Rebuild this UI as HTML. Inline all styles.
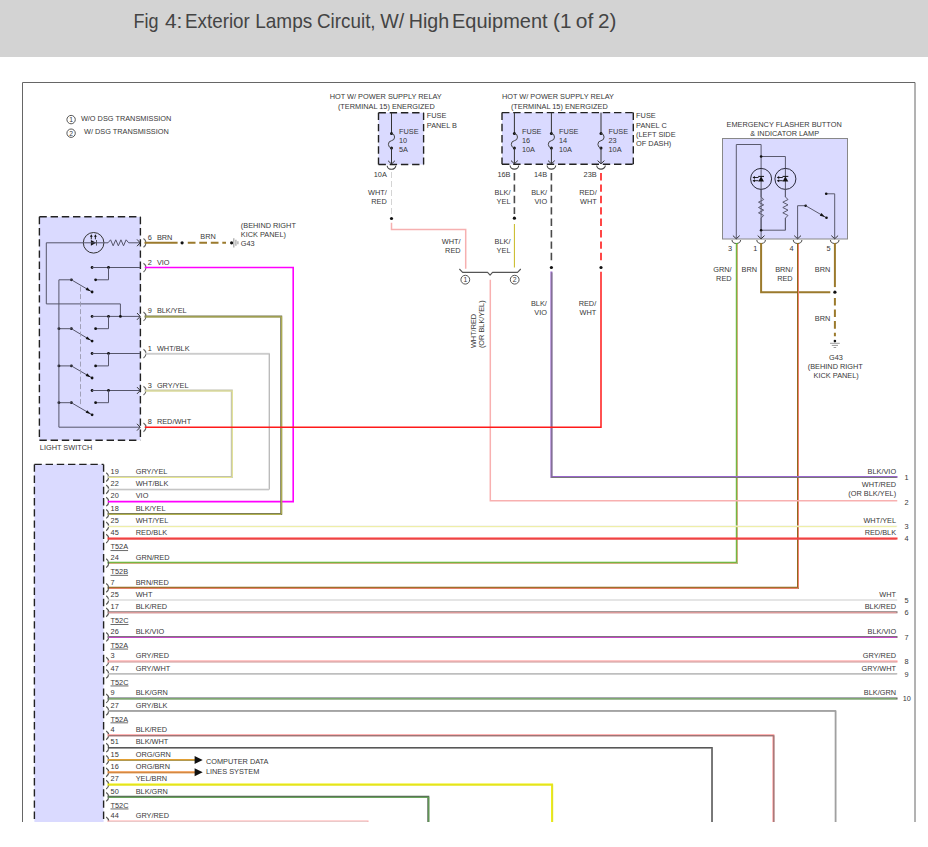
<!DOCTYPE html><html><head><meta charset="utf-8"><style>html,body{margin:0;padding:0;background:#fff;overflow:hidden}svg{display:block}</style></head><body><svg width="928" height="847" viewBox="0 0 928 847" font-family="Liberation Sans, sans-serif">
<rect x="0" y="0" width="928" height="847" fill="#fff"/>
<rect x="0" y="0" width="928" height="57" fill="#d3d3d3"/>
<text x="133.60" y="28.1" font-size="20.2" fill="#444" textLength="25.00" lengthAdjust="spacingAndGlyphs">Fig</text>
<text x="165.00" y="28.1" font-size="20.2" fill="#444" textLength="17.40" lengthAdjust="spacingAndGlyphs">4:</text>
<text x="185.00" y="28.1" font-size="20.2" fill="#444" textLength="64.80" lengthAdjust="spacingAndGlyphs">Exterior</text>
<text x="255.20" y="28.1" font-size="20.2" fill="#444" textLength="57.00" lengthAdjust="spacingAndGlyphs">Lamps</text>
<text x="317.00" y="28.1" font-size="20.2" fill="#444" textLength="58.60" lengthAdjust="spacingAndGlyphs">Circuit,</text>
<text x="380.20" y="28.1" font-size="20.2" fill="#444" textLength="24.00" lengthAdjust="spacingAndGlyphs">W/</text>
<text x="408.80" y="28.1" font-size="20.2" fill="#444" textLength="40.40" lengthAdjust="spacingAndGlyphs">High</text>
<text x="452.00" y="28.1" font-size="20.2" fill="#444" textLength="95.60" lengthAdjust="spacingAndGlyphs">Equipment</text>
<text x="553.00" y="28.1" font-size="20.2" fill="#444" textLength="18.40" lengthAdjust="spacingAndGlyphs">(1</text>
<text x="575.80" y="28.1" font-size="20.2" fill="#444" textLength="17.50" lengthAdjust="spacingAndGlyphs">of</text>
<text x="598.00" y="28.1" font-size="20.2" fill="#444" textLength="18.40" lengthAdjust="spacingAndGlyphs">2)</text>
<path d="M22.5,822 L22.5,82.5 L915,82.5 L915,822" stroke="#666" stroke-width="1" fill="none"/>
<circle cx="71.1" cy="119.6" r="4.2" fill="none" stroke="#444" stroke-width="0.9"/>
<text x="71.1" y="122.0" text-anchor="middle" font-size="6.8" fill="#383838">1</text>
<circle cx="71.1" cy="133.2" r="4.2" fill="none" stroke="#444" stroke-width="0.9"/>
<text x="71.1" y="135.6" text-anchor="middle" font-size="6.8" fill="#383838">2</text>
<text x="80.9" y="120.8" font-size="7.35" fill="#383838">W/O DSG TRANSMISSION</text>
<text x="84" y="134" font-size="7.35" fill="#383838">W/ DSG TRANSMISSION</text>
<text x="329.7" y="99" font-size="7.35" fill="#383838">HOT W/ POWER SUPPLY RELAY</text>
<text x="337.9" y="108.8" font-size="7.35" fill="#383838">(TERMINAL 15) ENERGIZED</text>
<rect x="378.5" y="112.7" width="45.10000000000002" height="51.8" fill="#dadaff"/>
<path d="M378.5,112.7 L423.6,112.7 M378.5,112.7 L378.5,164.5 M423.6,112.7 L423.6,164.5 M378.5,164.5 L423.6,164.5" stroke="#222" stroke-width="1.4" stroke-dasharray="7.4,3.8" fill="none"/>
<text x="426.8" y="117.7" font-size="7.35" fill="#383838">FUSE</text>
<text x="426.8" y="127.9" font-size="7.35" fill="#383838">PANEL B</text>
<line x1="391.5" y1="112.7" x2="391.5" y2="133.3" stroke="#333" stroke-width="1"/>
<circle cx="391.5" cy="133.4" r="1.5" fill="#111"/>
<circle cx="391.5" cy="148" r="1.5" fill="#111"/>
<path d="M391.5,133.4 A3.7,3.7 0 0 1 391.5,140.7 A3.7,3.7 0 0 0 391.5,148" stroke="#444" stroke-width="1" fill="none"/>
<line x1="391.5" y1="147.9" x2="391.5" y2="164.0" stroke="#333" stroke-width="1"/>
<path d="M388.1,160.8 L391.5,164.0 L394.9,160.8" stroke="#333" stroke-width="1" fill="none"/>
<path d="M387.2,165.7 A4.3,3.6 0 0 0 395.8,165.7" stroke="#444" stroke-width="1.1" fill="none"/>
<text x="399.0" y="133.8" font-size="7.35" fill="#383838">FUSE</text>
<text x="399.0" y="143" font-size="7.35" fill="#383838">10</text>
<text x="399.0" y="151.8" font-size="7.35" fill="#383838">5A</text>
<text x="386.8" y="177" text-anchor="end" font-size="7.35" fill="#383838">10A</text>
<text x="386.8" y="194.7" text-anchor="end" font-size="7.35" fill="#383838">WHT/</text>
<text x="386.8" y="203.8" text-anchor="end" font-size="7.35" fill="#383838">RED</text>
<line x1="391.5" y1="172" x2="391.5" y2="214.5" stroke="#d4d4d4" stroke-width="1" stroke-dasharray="6,3"/>
<circle cx="391.5" cy="218.5" r="1.6" fill="#111"/>
<path d="M391.5,223.5 L391.5,229.6 L465.7,229.6 L465.7,268" stroke="#f6b0b0" stroke-width="1.5" fill="none" stroke-linejoin="miter" stroke-linecap="square"/>
<text x="501.9" y="99" font-size="7.35" fill="#383838">HOT W/ POWER SUPPLY RELAY</text>
<text x="510.9" y="108.7" font-size="7.35" fill="#383838">(TERMINAL 15) ENERGIZED</text>
<rect x="502" y="112.6" width="131.29999999999995" height="51.70000000000002" fill="#dadaff"/>
<path d="M502,112.6 L633.3,112.6 M502,112.6 L502,164.3 M633.3,112.6 L633.3,164.3 M502,164.3 L633.3,164.3" stroke="#222" stroke-width="1.4" stroke-dasharray="7.4,3.8" fill="none"/>
<text x="636.1" y="117.8" font-size="7.35" fill="#383838">FUSE</text>
<text x="636.1" y="128.3" font-size="7.35" fill="#383838">PANEL C</text>
<text x="636.1" y="136.8" font-size="7.35" fill="#383838">(LEFT SIDE</text>
<text x="636.1" y="146" font-size="7.35" fill="#383838">OF DASH)</text>
<line x1="514.4" y1="112.6" x2="514.4" y2="133.3" stroke="#333" stroke-width="1"/>
<circle cx="514.4" cy="133.4" r="1.5" fill="#111"/>
<circle cx="514.4" cy="148" r="1.5" fill="#111"/>
<path d="M514.4,133.4 A3.7,3.7 0 0 1 514.4,140.7 A3.7,3.7 0 0 0 514.4,148" stroke="#444" stroke-width="1" fill="none"/>
<line x1="514.4" y1="147.9" x2="514.4" y2="163.8" stroke="#333" stroke-width="1"/>
<path d="M511.0,160.60000000000002 L514.4,163.8 L517.8,160.60000000000002" stroke="#333" stroke-width="1" fill="none"/>
<path d="M510.09999999999997,165.5 A4.3,3.6 0 0 0 518.6999999999999,165.5" stroke="#444" stroke-width="1.1" fill="none"/>
<text x="521.9" y="133.8" font-size="7.35" fill="#383838">FUSE</text>
<text x="521.9" y="143" font-size="7.35" fill="#383838">16</text>
<text x="521.9" y="151.8" font-size="7.35" fill="#383838">10A</text>
<line x1="551.4" y1="112.6" x2="551.4" y2="133.3" stroke="#333" stroke-width="1"/>
<circle cx="551.4" cy="133.4" r="1.5" fill="#111"/>
<circle cx="551.4" cy="148" r="1.5" fill="#111"/>
<path d="M551.4,133.4 A3.7,3.7 0 0 1 551.4,140.7 A3.7,3.7 0 0 0 551.4,148" stroke="#444" stroke-width="1" fill="none"/>
<line x1="551.4" y1="147.9" x2="551.4" y2="163.8" stroke="#333" stroke-width="1"/>
<path d="M548.0,160.60000000000002 L551.4,163.8 L554.8,160.60000000000002" stroke="#333" stroke-width="1" fill="none"/>
<path d="M547.1,165.5 A4.3,3.6 0 0 0 555.6999999999999,165.5" stroke="#444" stroke-width="1.1" fill="none"/>
<text x="558.9" y="133.8" font-size="7.35" fill="#383838">FUSE</text>
<text x="558.9" y="143" font-size="7.35" fill="#383838">14</text>
<text x="558.9" y="151.8" font-size="7.35" fill="#383838">10A</text>
<line x1="601" y1="112.6" x2="601" y2="133.3" stroke="#333" stroke-width="1"/>
<circle cx="601" cy="133.4" r="1.5" fill="#111"/>
<circle cx="601" cy="148" r="1.5" fill="#111"/>
<path d="M601,133.4 A3.7,3.7 0 0 1 601,140.7 A3.7,3.7 0 0 0 601,148" stroke="#444" stroke-width="1" fill="none"/>
<line x1="601" y1="147.9" x2="601" y2="163.8" stroke="#333" stroke-width="1"/>
<path d="M597.6,160.60000000000002 L601,163.8 L604.4,160.60000000000002" stroke="#333" stroke-width="1" fill="none"/>
<path d="M596.7,165.5 A4.3,3.6 0 0 0 605.3,165.5" stroke="#444" stroke-width="1.1" fill="none"/>
<text x="608.5" y="133.8" font-size="7.35" fill="#383838">FUSE</text>
<text x="608.5" y="143" font-size="7.35" fill="#383838">23</text>
<text x="608.5" y="151.8" font-size="7.35" fill="#383838">10A</text>
<text x="510.5" y="176.6" text-anchor="end" font-size="7.35" fill="#383838">16B</text>
<text x="547.1" y="176.6" text-anchor="end" font-size="7.35" fill="#383838">14B</text>
<text x="596.7" y="176.6" text-anchor="end" font-size="7.35" fill="#383838">23B</text>
<text x="510.5" y="194.9" text-anchor="end" font-size="7.35" fill="#383838">BLK/</text>
<text x="510.5" y="204" text-anchor="end" font-size="7.35" fill="#383838">YEL</text>
<text x="547.1" y="194.9" text-anchor="end" font-size="7.35" fill="#383838">BLK/</text>
<text x="547.1" y="204" text-anchor="end" font-size="7.35" fill="#383838">VIO</text>
<text x="596.7" y="194.9" text-anchor="end" font-size="7.35" fill="#383838">RED/</text>
<text x="596.7" y="204" text-anchor="end" font-size="7.35" fill="#383838">WHT</text>
<line x1="514.4" y1="173" x2="514.4" y2="214" stroke="#4a4a4a" stroke-width="1.6" stroke-dasharray="7.4,4"/>
<circle cx="514.4" cy="218.2" r="1.6" fill="#111"/>
<line x1="514.4" y1="224" x2="514.4" y2="267.5" stroke="#c8b820" stroke-width="1"/>
<line x1="551.4" y1="173" x2="551.4" y2="262" stroke="#4a4a4a" stroke-width="1.6" stroke-dasharray="7.4,4"/>
<circle cx="551.4" cy="267.5" r="1.6" fill="#111"/>
<line x1="601" y1="173" x2="601" y2="262" stroke="#ff1a1a" stroke-width="1.6" stroke-dasharray="7.4,4"/>
<circle cx="601" cy="267.5" r="1.6" fill="#111"/>
<path d="M459.4,269 L462.6,272.4 L487.6,272.4 L490.1,275.2 L492.5,272.4 L517.5,272.4 L520.8,269" stroke="#555" stroke-width="1.1" fill="none" stroke-linejoin="round"/>
<circle cx="465.3" cy="279.7" r="4.4" fill="none" stroke="#444" stroke-width="0.9"/>
<text x="465.3" y="282.09999999999997" text-anchor="middle" font-size="6.8" fill="#383838">1</text>
<circle cx="514.7" cy="279.7" r="4.4" fill="none" stroke="#444" stroke-width="0.9"/>
<text x="514.7" y="282.09999999999997" text-anchor="middle" font-size="6.8" fill="#383838">2</text>
<text x="460.6" y="244.2" text-anchor="end" font-size="7.35" fill="#383838">WHT/</text>
<text x="460.6" y="252.5" text-anchor="end" font-size="7.35" fill="#383838">RED</text>
<text x="510.5" y="244.2" text-anchor="end" font-size="7.35" fill="#383838">BLK/</text>
<text x="510.5" y="252.5" text-anchor="end" font-size="7.35" fill="#383838">YEL</text>
<text transform="translate(475.5,348.1) rotate(-90)" font-size="7.35" fill="#383838">WHT/RED</text>
<text transform="translate(484.4,348.1) rotate(-90)" font-size="7.35" fill="#383838">(OR BLK/YEL)</text>
<text x="546.9" y="306.2" text-anchor="end" font-size="7.35" fill="#383838">BLK/</text>
<text x="546.9" y="314.8" text-anchor="end" font-size="7.35" fill="#383838">VIO</text>
<text x="596.2" y="306.2" text-anchor="end" font-size="7.35" fill="#383838">RED/</text>
<text x="596.2" y="314.8" text-anchor="end" font-size="7.35" fill="#383838">WHT</text>
<text x="784.1" y="127.2" text-anchor="middle" font-size="7.35" fill="#383838">EMERGENCY FLASHER BUTTON</text>
<text x="784.7" y="135.8" text-anchor="middle" font-size="7.35" fill="#383838">&amp; INDICATOR LAMP</text>
<rect x="722.5" y="138.5" width="125" height="100.5" fill="#dadaff" stroke="#888" stroke-width="1"/>
<path d="M736.3,238.5 L736.3,144.5 L761.1,144.5 L761.1,238.5" stroke="#5a5a6e" stroke-width="1" fill="none"/>
<path d="M761.1,156.5 L785.4,156.5 L785.4,196.9" stroke="#5a5a6e" stroke-width="1" fill="none"/>
<circle cx="761.1" cy="156.5" r="1.3" fill="#111"/>
<circle cx="761.1" cy="178.9" r="10.5" fill="none" stroke="#2a2a3a" stroke-width="1"/>
<path d="M758.2,181.4 L764.0,181.4 L761.1,176.6 Z" fill="#111"/>
<line x1="758.2" y1="176.4" x2="764.0" y2="176.4" stroke="#111" stroke-width="1"/>
<line x1="753.6" y1="177.5" x2="758.5" y2="177.5" stroke="#111" stroke-width="0.9"/>
<path d="M752.5,177.5 L754.9,176.0 L754.9,179.0 Z" fill="#111"/>
<line x1="753.6" y1="180.7" x2="758.5" y2="180.7" stroke="#111" stroke-width="0.9"/>
<path d="M752.5,180.7 L754.9,179.2 L754.9,182.2 Z" fill="#111"/>
<path d="M761.1,189.4 L761.1,196.9 L763.7,199.55 L758.5,202.20000000000002 L763.7,204.85 L758.5,207.5 L763.7,210.15 L758.5,212.8 L763.7,215.45000000000002 L761.1,218.1 L761.1,230.2" stroke="#5a5a6e" stroke-width="1" fill="none"/>
<circle cx="785.4" cy="178.9" r="10.5" fill="none" stroke="#2a2a3a" stroke-width="1"/>
<path d="M782.5,181.4 L788.3,181.4 L785.4,176.6 Z" fill="#111"/>
<line x1="782.5" y1="176.4" x2="788.3" y2="176.4" stroke="#111" stroke-width="1"/>
<line x1="777.9" y1="177.5" x2="782.8" y2="177.5" stroke="#111" stroke-width="0.9"/>
<path d="M776.8,177.5 L779.1999999999999,176.0 L779.1999999999999,179.0 Z" fill="#111"/>
<line x1="777.9" y1="180.7" x2="782.8" y2="180.7" stroke="#111" stroke-width="0.9"/>
<path d="M776.8,180.7 L779.1999999999999,179.2 L779.1999999999999,182.2 Z" fill="#111"/>
<path d="M785.4,189.4 L785.4,196.9 L788.0,199.55 L782.8,202.20000000000002 L788.0,204.85 L782.8,207.5 L788.0,210.15 L782.8,212.8 L788.0,215.45000000000002 L785.4,218.1 L785.4,230.2" stroke="#5a5a6e" stroke-width="1" fill="none"/>
<path d="M761.1,230.2 L785.4,230.2 L785.4,218.1" stroke="#5a5a6e" stroke-width="1" fill="none"/>
<circle cx="761.1" cy="230.2" r="1.3" fill="#111"/>
<path d="M797.6,238.5 L797.6,205.7 L805.7,205.7" stroke="#5a5a6e" stroke-width="1" fill="none"/>
<circle cx="805.7" cy="205.7" r="1.3" fill="#111"/>
<line x1="805.7" y1="205.7" x2="826.5" y2="217.8" stroke="#5a5a6e" stroke-width="1"/>
<path d="M824.94,216.89 L819.82,215.76 L821.43,213.00 Z" fill="#111"/>
<circle cx="826.5" cy="217.8" r="1.3" fill="#111"/>
<path d="M834.7,238.5 L834.7,193.8 L826.2,193.8" stroke="#5a5a6e" stroke-width="1" fill="none"/>
<circle cx="826.2" cy="193.8" r="1.3" fill="#111"/>
<path d="M732.9,235.60000000000002 L736.3,238.8 L739.6999999999999,235.60000000000002" stroke="#333" stroke-width="1" fill="none"/>
<path d="M732.0,239.89999999999998 A4.3,3.6 0 0 0 740.5999999999999,239.89999999999998" stroke="#555" stroke-width="1.1" fill="none"/>
<path d="M757.7,235.60000000000002 L761.1,238.8 L764.5,235.60000000000002" stroke="#333" stroke-width="1" fill="none"/>
<path d="M756.8000000000001,239.89999999999998 A4.3,3.6 0 0 0 765.4,239.89999999999998" stroke="#555" stroke-width="1.1" fill="none"/>
<path d="M794.2,235.60000000000002 L797.6,238.8 L801.0,235.60000000000002" stroke="#333" stroke-width="1" fill="none"/>
<path d="M793.3000000000001,239.89999999999998 A4.3,3.6 0 0 0 801.9,239.89999999999998" stroke="#555" stroke-width="1.1" fill="none"/>
<path d="M831.3000000000001,235.60000000000002 L834.7,238.8 L838.1,235.60000000000002" stroke="#333" stroke-width="1" fill="none"/>
<path d="M830.4000000000001,239.89999999999998 A4.3,3.6 0 0 0 839.0,239.89999999999998" stroke="#555" stroke-width="1.1" fill="none"/>
<text x="732.2" y="250.7" text-anchor="end" font-size="7.35" fill="#383838">3</text>
<text x="757.3" y="250.7" text-anchor="end" font-size="7.35" fill="#383838">1</text>
<text x="793.6" y="250.7" text-anchor="end" font-size="7.35" fill="#383838">4</text>
<text x="830.7" y="250.7" text-anchor="end" font-size="7.35" fill="#383838">5</text>
<path d="M736.8,244 L736.8,562.8 L108.5,562.8" stroke="#55bb33" stroke-width="2" fill="none" stroke-linejoin="miter" stroke-linecap="square"/>
<line x1="737.3" y1="244" x2="737.3" y2="562.8" stroke="#e8a888" stroke-width="1"/>
<line x1="736.8" y1="563.3" x2="108.5" y2="563.3" stroke="#e8a888" stroke-width="1"/>
<path d="M761.1,244 L761.1,292.2 L829.3,292.2" stroke="#9b7a2c" stroke-width="2" fill="none" stroke-linejoin="miter" stroke-linecap="square"/>
<path d="M798,244 L798,587.8 L108.5,587.8" stroke="#8c6a1c" stroke-width="2" fill="none" stroke-linejoin="miter" stroke-linecap="square"/>
<line x1="798.5" y1="244" x2="798.5" y2="587.8" stroke="#f08070" stroke-width="1"/>
<line x1="798" y1="588.3" x2="108.5" y2="588.3" stroke="#f08070" stroke-width="1"/>
<path d="M834.9,244 L834.9,286.1" stroke="#9b7a2c" stroke-width="2" fill="none" stroke-linejoin="miter" stroke-linecap="square"/>
<circle cx="834.9" cy="292.2" r="1.6" fill="#111"/>
<line x1="834.9" y1="297.9" x2="834.9" y2="336.2" stroke="#9b7a2c" stroke-width="2" stroke-dasharray="7.6,4"/>
<circle cx="834.9" cy="341.1" r="1.3" fill="#111"/>
<line x1="830" y1="343.3" x2="839.8" y2="343.3" stroke="#999" stroke-width="1"/>
<line x1="831.8" y1="345.4" x2="838" y2="345.4" stroke="#999" stroke-width="1"/>
<line x1="833.6" y1="347.5" x2="836.2" y2="347.5" stroke="#999" stroke-width="1"/>
<text x="731.6" y="271.7" text-anchor="end" font-size="7.35" fill="#383838">GRN/</text>
<text x="731.6" y="280.5" text-anchor="end" font-size="7.35" fill="#383838">RED</text>
<text x="741.6" y="271.7" font-size="7.35" fill="#383838">BRN</text>
<text x="792.7" y="271.7" text-anchor="end" font-size="7.35" fill="#383838">BRN/</text>
<text x="792.7" y="280.5" text-anchor="end" font-size="7.35" fill="#383838">RED</text>
<text x="830.3" y="271.7" text-anchor="end" font-size="7.35" fill="#383838">BRN</text>
<text x="830.3" y="320.9" text-anchor="end" font-size="7.35" fill="#383838">BRN</text>
<text x="836" y="359.6" text-anchor="middle" font-size="7.35" fill="#383838">G43</text>
<text x="835.3" y="368.9" text-anchor="middle" font-size="7.35" fill="#383838">(BEHIND RIGHT</text>
<text x="836.2" y="378.2" text-anchor="middle" font-size="7.35" fill="#383838">KICK PANEL)</text>
<rect x="39.4" y="216.8" width="101.0" height="223.39999999999998" fill="#dadaff"/>
<path d="M39.4,216.8 L140.4,216.8 M39.4,216.8 L39.4,440.2 M140.4,216.8 L140.4,440.2 M39.4,440.2 L140.4,440.2" stroke="#222" stroke-width="1.4" stroke-dasharray="7.4,3.8" fill="none"/>
<text x="39.8" y="450.2" font-size="7.35" fill="#383838">LIGHT SWITCH</text>
<circle cx="93.6" cy="242.8" r="10.3" fill="none" stroke="#333" stroke-width="1"/>
<path d="M90.9,239.9 L90.9,245.8 L96.1,242.8 Z" fill="#111"/>
<line x1="96.5" y1="240.0" x2="96.5" y2="245.60000000000002" stroke="#333" stroke-width="0.8"/>
<line x1="91.3" y1="239.3" x2="91.3" y2="236" stroke="#111" stroke-width="0.9"/>
<path d="M91.3,234.3 L89.89999999999999,236.8 L92.7,236.8 Z" fill="#111"/>
<line x1="95.4" y1="239.3" x2="95.4" y2="236" stroke="#111" stroke-width="0.9"/>
<path d="M95.4,234.3 L94.0,236.8 L96.80000000000001,236.8 Z" fill="#111"/>
<path d="M103.8,242.8 L46.3,242.8 L46.3,303.9 L120.4,303.9 L120.4,316.4" stroke="#55556a" stroke-width="1" fill="none"/>
<path d="M103.8,242.8 L108,242.8 L110.59,239.8 L113.17,245.8 L115.76,239.8 L118.35,245.8 L120.94,239.8 L123.53,245.8 L126.11,239.8 L128.70,242.8 L140,242.8" stroke="#55556a" stroke-width="1" fill="none"/>
<path d="M137.0,239.4 L140.2,242.8 L137.0,246.20000000000002" stroke="#333" stroke-width="1" fill="none"/>
<circle cx="92.1" cy="267.5" r="1.4" fill="#111"/>
<line x1="92.1" y1="267.5" x2="140.2" y2="267.5" stroke="#55556a" stroke-width="1"/>
<circle cx="108.5" cy="267.5" r="1.4" fill="#111"/>
<path d="M108.5,267.5 L108.5,279.8 L95.6,279.8" stroke="#55556a" stroke-width="1" fill="none"/>
<circle cx="95.6" cy="279.8" r="1.4" fill="#111"/>
<circle cx="71.4" cy="279.8" r="1.4" fill="#111"/>
<line x1="58.9" y1="279.8" x2="71.4" y2="279.8" stroke="#55556a" stroke-width="1"/>
<line x1="71.4" y1="279.8" x2="92.1" y2="292.0" stroke="#55556a" stroke-width="1"/>
<path d="M90.72,291.19 L85.65,289.94 L87.18,287.36 Z" fill="#111"/>
<circle cx="92.1" cy="292.0" r="1.4" fill="#111"/>
<circle cx="92.1" cy="316.4" r="1.4" fill="#111"/>
<line x1="92.1" y1="316.4" x2="140.2" y2="316.4" stroke="#55556a" stroke-width="1"/>
<circle cx="108.5" cy="316.4" r="1.4" fill="#111"/>
<path d="M108.5,316.4 L108.5,328.7 L95.6,328.7" stroke="#55556a" stroke-width="1" fill="none"/>
<circle cx="95.6" cy="328.7" r="1.4" fill="#111"/>
<circle cx="71.4" cy="328.7" r="1.4" fill="#111"/>
<line x1="58.9" y1="328.7" x2="71.4" y2="328.7" stroke="#55556a" stroke-width="1"/>
<circle cx="58.9" cy="328.7" r="1.4" fill="#111"/>
<line x1="71.4" y1="328.7" x2="92.1" y2="341.1" stroke="#55556a" stroke-width="1"/>
<path d="M90.73,340.28 L85.67,339.00 L87.21,336.42 Z" fill="#111"/>
<circle cx="92.1" cy="341.1" r="1.4" fill="#111"/>
<path d="M137.0,313.0 L140.2,316.4 L137.0,319.79999999999995" stroke="#333" stroke-width="1" fill="none"/>
<circle cx="92.1" cy="353.5" r="1.4" fill="#111"/>
<line x1="92.1" y1="353.5" x2="140.2" y2="353.5" stroke="#55556a" stroke-width="1"/>
<circle cx="108.5" cy="353.5" r="1.4" fill="#111"/>
<path d="M108.5,353.5 L108.5,365.9 L95.6,365.9" stroke="#55556a" stroke-width="1" fill="none"/>
<circle cx="95.6" cy="365.9" r="1.4" fill="#111"/>
<circle cx="71.4" cy="365.9" r="1.4" fill="#111"/>
<line x1="58.9" y1="365.9" x2="71.4" y2="365.9" stroke="#55556a" stroke-width="1"/>
<circle cx="58.9" cy="365.9" r="1.4" fill="#111"/>
<line x1="71.4" y1="365.9" x2="92.1" y2="378.0" stroke="#55556a" stroke-width="1"/>
<path d="M90.72,377.19 L85.65,375.96 L87.16,373.37 Z" fill="#111"/>
<circle cx="92.1" cy="378.0" r="1.4" fill="#111"/>
<circle cx="92.1" cy="390.5" r="1.4" fill="#111"/>
<line x1="92.1" y1="390.5" x2="140.2" y2="390.5" stroke="#55556a" stroke-width="1"/>
<circle cx="108.5" cy="390.5" r="1.4" fill="#111"/>
<path d="M108.5,390.5 L108.5,402.7 L95.6,402.7" stroke="#55556a" stroke-width="1" fill="none"/>
<circle cx="95.6" cy="402.7" r="1.4" fill="#111"/>
<circle cx="71.4" cy="402.7" r="1.4" fill="#111"/>
<line x1="58.9" y1="402.7" x2="71.4" y2="402.7" stroke="#55556a" stroke-width="1"/>
<circle cx="58.9" cy="402.7" r="1.4" fill="#111"/>
<line x1="71.4" y1="402.7" x2="92.1" y2="414.8" stroke="#55556a" stroke-width="1"/>
<path d="M90.72,413.99 L85.65,412.76 L87.16,410.17 Z" fill="#111"/>
<circle cx="92.1" cy="414.8" r="1.4" fill="#111"/>
<path d="M137.0,387.1 L140.2,390.5 L137.0,393.9" stroke="#333" stroke-width="1" fill="none"/>
<circle cx="120.4" cy="316.4" r="1.4" fill="#111"/>
<path d="M58.9,279.8 L58.9,427.2 L140,427.2" stroke="#55556a" stroke-width="1" fill="none"/>
<path d="M137.0,423.8 L140.2,427.2 L137.0,430.59999999999997" stroke="#333" stroke-width="1" fill="none"/>
<line x1="80.5" y1="286.6" x2="80.5" y2="406.3" stroke="#9a9ab0" stroke-width="0.9" stroke-dasharray="5,2.5"/>
<path d="M143.5,238.5 C146.8,240.60000000000002 146.8,245.0 143.5,247.3" stroke="#666" stroke-width="1.15" fill="none"/>
<text x="147.7" y="239.8" font-size="7.35" fill="#383838">6</text>
<text x="156.9" y="239.8" font-size="7.35" fill="#383838">BRN</text>
<path d="M143.5,263.2 C146.8,265.3 146.8,269.7 143.5,272.0" stroke="#666" stroke-width="1.15" fill="none"/>
<text x="147.7" y="264.5" font-size="7.35" fill="#383838">2</text>
<text x="156.9" y="264.5" font-size="7.35" fill="#383838">VIO</text>
<path d="M143.5,312.09999999999997 C146.8,314.2 146.8,318.59999999999997 143.5,320.9" stroke="#666" stroke-width="1.15" fill="none"/>
<text x="147.7" y="313.4" font-size="7.35" fill="#383838">9</text>
<text x="156.9" y="313.4" font-size="7.35" fill="#383838">BLK/YEL</text>
<path d="M143.5,349.2 C146.8,351.3 146.8,355.7 143.5,358.0" stroke="#666" stroke-width="1.15" fill="none"/>
<text x="147.7" y="350.5" font-size="7.35" fill="#383838">1</text>
<text x="156.9" y="350.5" font-size="7.35" fill="#383838">WHT/BLK</text>
<path d="M143.5,386.2 C146.8,388.3 146.8,392.7 143.5,395.0" stroke="#666" stroke-width="1.15" fill="none"/>
<text x="147.7" y="387.5" font-size="7.35" fill="#383838">3</text>
<text x="156.9" y="387.5" font-size="7.35" fill="#383838">GRY/YEL</text>
<path d="M143.5,422.9 C146.8,425.0 146.8,429.4 143.5,431.7" stroke="#666" stroke-width="1.15" fill="none"/>
<text x="147.7" y="424.2" font-size="7.35" fill="#383838">8</text>
<text x="156.9" y="424.2" font-size="7.35" fill="#383838">RED/WHT</text>
<path d="M145.5,242.8 L176.6,242.8" stroke="#9b7a2c" stroke-width="2" fill="none" stroke-linejoin="miter" stroke-linecap="square"/>
<circle cx="182.1" cy="242.8" r="1.6" fill="#111"/>
<line x1="187.8" y1="242.8" x2="226" y2="242.8" stroke="#9b7a2c" stroke-width="2" stroke-dasharray="7.7,3.8"/>
<circle cx="231.6" cy="242.8" r="1.6" fill="#111"/>
<line x1="233.8" y1="238.20000000000002" x2="233.8" y2="247.4" stroke="#aaa" stroke-width="1.3"/>
<line x1="235.9" y1="239.8" x2="235.9" y2="245.8" stroke="#aaa" stroke-width="1.3"/>
<line x1="237.9" y1="241.3" x2="237.9" y2="244.3" stroke="#aaa" stroke-width="1.3"/>
<text x="200.3" y="238.9" font-size="7.35" fill="#383838">BRN</text>
<text x="240.8" y="227.8" font-size="7.35" fill="#383838">(BEHIND RIGHT</text>
<text x="240.8" y="236.6" font-size="7.35" fill="#383838">KICK PANEL)</text>
<text x="240.8" y="245.8" font-size="7.35" fill="#383838">G43</text>
<rect x="34.4" y="464.4" width="69.19999999999999" height="435.6" fill="#dadaff"/>
<path d="M34.4,464.4 L103.6,464.4 M34.4,464.4 L34.4,900 M103.6,464.4 L103.6,900 M34.4,900 L103.6,900" stroke="#222" stroke-width="1.4" stroke-dasharray="7.4,3.8" fill="none"/>
<path d="M106.2,472.7 C109.5,474.8 109.5,479.2 106.2,481.5" stroke="#555" stroke-width="1.15" fill="none"/>
<text x="110.6" y="473.8" font-size="7.35" fill="#383838">19</text>
<text x="135.7" y="473.8" font-size="7.35" fill="#383838">GRY/YEL</text>
<path d="M108.5,477.0 L231.8,477.0 L231.8,390.5 L145.5,390.5" stroke="#c0c0b0" stroke-width="2" fill="none" stroke-linejoin="miter" stroke-linecap="square"/>
<line x1="108.5" y1="477.5" x2="231.8" y2="477.5" stroke="#e8e890" stroke-width="1"/>
<line x1="232.3" y1="477.0" x2="232.3" y2="390.5" stroke="#e8e890" stroke-width="1"/>
<line x1="231.8" y1="391.0" x2="145.5" y2="391.0" stroke="#e8e890" stroke-width="1"/>
<path d="M106.2,485.0 C109.5,487.1 109.5,491.5 106.2,493.8" stroke="#555" stroke-width="1.15" fill="none"/>
<text x="110.6" y="486.1" font-size="7.35" fill="#383838">22</text>
<text x="135.7" y="486.1" font-size="7.35" fill="#383838">WHT/BLK</text>
<path d="M108.5,489.3 L269,489.3 L269,353.5 L145.5,353.5" stroke="#dddddd" stroke-width="1.5" fill="none" stroke-linejoin="miter" stroke-linecap="square"/>
<line x1="108.5" y1="489.8" x2="269" y2="489.8" stroke="#bbbbbb" stroke-width="1"/>
<line x1="269.5" y1="489.3" x2="269.5" y2="353.5" stroke="#bbbbbb" stroke-width="1"/>
<line x1="269" y1="354.0" x2="145.5" y2="354.0" stroke="#bbbbbb" stroke-width="1"/>
<path d="M106.2,497.3 C109.5,499.40000000000003 109.5,503.8 106.2,506.1" stroke="#555" stroke-width="1.15" fill="none"/>
<text x="110.6" y="498.40000000000003" font-size="7.35" fill="#383838">20</text>
<text x="135.7" y="498.40000000000003" font-size="7.35" fill="#383838">VIO</text>
<path d="M108.5,501.6 L293.2,501.6 L293.2,267.5 L145.5,267.5" stroke="#ff00ff" stroke-width="1.6" fill="none" stroke-linejoin="miter" stroke-linecap="square"/>
<path d="M106.2,509.59999999999997 C109.5,511.7 109.5,516.1 106.2,518.4" stroke="#555" stroke-width="1.15" fill="none"/>
<text x="110.6" y="510.7" font-size="7.35" fill="#383838">18</text>
<text x="135.7" y="510.7" font-size="7.35" fill="#383838">BLK/YEL</text>
<path d="M108.5,513.9 L281.2,513.9 L281.2,316.4 L145.5,316.4" stroke="#777755" stroke-width="2" fill="none" stroke-linejoin="miter" stroke-linecap="square"/>
<line x1="108.5" y1="514.4" x2="281.2" y2="514.4" stroke="#b8b850" stroke-width="1"/>
<line x1="281.7" y1="513.9" x2="281.7" y2="316.4" stroke="#b8b850" stroke-width="1"/>
<line x1="281.2" y1="316.9" x2="145.5" y2="316.9" stroke="#b8b850" stroke-width="1"/>
<path d="M106.2,521.9000000000001 C109.5,524.0 109.5,528.4000000000001 106.2,530.7" stroke="#555" stroke-width="1.15" fill="none"/>
<text x="110.6" y="523.0" font-size="7.35" fill="#383838">25</text>
<text x="135.7" y="523.0" font-size="7.35" fill="#383838">WHT/YEL</text>
<path d="M108.5,526.2 L896.5,526.2" stroke="#eeeeee" stroke-width="1.5" fill="none" stroke-linejoin="miter" stroke-linecap="square"/>
<line x1="108.5" y1="526.7" x2="896.5" y2="526.7" stroke="#eeee99" stroke-width="1"/>
<path d="M106.2,534.2 C109.5,536.3 109.5,540.7 106.2,543.0" stroke="#555" stroke-width="1.15" fill="none"/>
<text x="110.6" y="535.3" font-size="7.35" fill="#383838">45</text>
<text x="135.7" y="535.3" font-size="7.35" fill="#383838">RED/BLK</text>
<path d="M108.5,538.5 L896.5,538.5" stroke="#ff3333" stroke-width="2" fill="none" stroke-linejoin="miter" stroke-linecap="square"/>
<line x1="108.5" y1="539.0" x2="896.5" y2="539.0" stroke="#dd5555" stroke-width="1"/>
<text x="110.5" y="549.3" font-size="7.35" fill="#383838" text-decoration="underline">T52A</text>
<path d="M106.2,558.8000000000001 C109.5,560.9 109.5,565.3000000000001 106.2,567.6" stroke="#555" stroke-width="1.15" fill="none"/>
<text x="110.6" y="559.9" font-size="7.35" fill="#383838">24</text>
<text x="135.7" y="559.9" font-size="7.35" fill="#383838">GRN/RED</text>
<text x="110.5" y="573.9" font-size="7.35" fill="#383838" text-decoration="underline">T52B</text>
<path d="M106.2,583.4000000000001 C109.5,585.5 109.5,589.9000000000001 106.2,592.2" stroke="#555" stroke-width="1.15" fill="none"/>
<text x="110.6" y="584.5" font-size="7.35" fill="#383838">7</text>
<text x="135.7" y="584.5" font-size="7.35" fill="#383838">BRN/RED</text>
<path d="M106.2,595.7 C109.5,597.8 109.5,602.2 106.2,604.5" stroke="#555" stroke-width="1.15" fill="none"/>
<text x="110.6" y="596.8" font-size="7.35" fill="#383838">25</text>
<text x="135.7" y="596.8" font-size="7.35" fill="#383838">WHT</text>
<path d="M108.5,600.0 L896.5,600.0" stroke="#dddddd" stroke-width="1.5" fill="none" stroke-linejoin="miter" stroke-linecap="square"/>
<path d="M106.2,608.0 C109.5,610.0999999999999 109.5,614.5 106.2,616.8" stroke="#555" stroke-width="1.15" fill="none"/>
<text x="110.6" y="609.0999999999999" font-size="7.35" fill="#383838">17</text>
<text x="135.7" y="609.0999999999999" font-size="7.35" fill="#383838">BLK/RED</text>
<path d="M108.5,612.3 L896.5,612.3" stroke="#887777" stroke-width="2" fill="none" stroke-linejoin="miter" stroke-linecap="square"/>
<line x1="108.5" y1="612.8" x2="896.5" y2="612.8" stroke="#ffaaaa" stroke-width="1"/>
<text x="110.5" y="623.1" font-size="7.35" fill="#383838" text-decoration="underline">T52C</text>
<path d="M106.2,632.6 C109.5,634.6999999999999 109.5,639.1 106.2,641.4" stroke="#555" stroke-width="1.15" fill="none"/>
<text x="110.6" y="633.6999999999999" font-size="7.35" fill="#383838">26</text>
<text x="135.7" y="633.6999999999999" font-size="7.35" fill="#383838">BLK/VIO</text>
<path d="M108.5,636.9 L896.5,636.9" stroke="#777777" stroke-width="2" fill="none" stroke-linejoin="miter" stroke-linecap="square"/>
<line x1="108.5" y1="637.4" x2="896.5" y2="637.4" stroke="#cc44cc" stroke-width="1"/>
<text x="110.5" y="647.7" font-size="7.35" fill="#383838" text-decoration="underline">T52A</text>
<path d="M106.2,657.2 C109.5,659.3 109.5,663.7 106.2,666.0" stroke="#555" stroke-width="1.15" fill="none"/>
<text x="110.6" y="658.3" font-size="7.35" fill="#383838">3</text>
<text x="135.7" y="658.3" font-size="7.35" fill="#383838">GRY/RED</text>
<path d="M108.5,661.5 L896.5,661.5" stroke="#ff9090" stroke-width="2" fill="none" stroke-linejoin="miter" stroke-linecap="square"/>
<line x1="108.5" y1="662.0" x2="896.5" y2="662.0" stroke="#cccccc" stroke-width="1"/>
<path d="M106.2,669.5 C109.5,671.5999999999999 109.5,676.0 106.2,678.3" stroke="#555" stroke-width="1.15" fill="none"/>
<text x="110.6" y="670.5999999999999" font-size="7.35" fill="#383838">47</text>
<text x="135.7" y="670.5999999999999" font-size="7.35" fill="#383838">GRY/WHT</text>
<path d="M108.5,673.8 L896.5,673.8" stroke="#bbbbbb" stroke-width="1.5" fill="none" stroke-linejoin="miter" stroke-linecap="square"/>
<line x1="108.5" y1="674.3" x2="896.5" y2="674.3" stroke="#cccccc" stroke-width="1"/>
<text x="110.5" y="684.6" font-size="7.35" fill="#383838" text-decoration="underline">T52C</text>
<path d="M106.2,694.1 C109.5,696.1999999999999 109.5,700.6 106.2,702.9" stroke="#555" stroke-width="1.15" fill="none"/>
<text x="110.6" y="695.1999999999999" font-size="7.35" fill="#383838">9</text>
<text x="135.7" y="695.1999999999999" font-size="7.35" fill="#383838">BLK/GRN</text>
<path d="M108.5,698.4 L896.5,698.4" stroke="#555566" stroke-width="2" fill="none" stroke-linejoin="miter" stroke-linecap="square"/>
<line x1="108.5" y1="698.9" x2="896.5" y2="698.9" stroke="#99dd77" stroke-width="1"/>
<path d="M106.2,706.4000000000001 C109.5,708.5 109.5,712.9000000000001 106.2,715.2" stroke="#555" stroke-width="1.15" fill="none"/>
<text x="110.6" y="707.5" font-size="7.35" fill="#383838">27</text>
<text x="135.7" y="707.5" font-size="7.35" fill="#383838">GRY/BLK</text>
<path d="M108.5,710.7 L835.4,710.7 L835.4,830" stroke="#aaaaaa" stroke-width="1.5" fill="none" stroke-linejoin="miter" stroke-linecap="square"/>
<line x1="108.5" y1="711.2" x2="835.4" y2="711.2" stroke="#999999" stroke-width="1"/>
<line x1="835.9" y1="710.7" x2="835.9" y2="830" stroke="#999999" stroke-width="1"/>
<text x="110.5" y="721.5" font-size="7.35" fill="#383838" text-decoration="underline">T52A</text>
<path d="M106.2,731.0 C109.5,733.0999999999999 109.5,737.5 106.2,739.8" stroke="#555" stroke-width="1.15" fill="none"/>
<text x="110.6" y="732.0999999999999" font-size="7.35" fill="#383838">4</text>
<text x="135.7" y="732.0999999999999" font-size="7.35" fill="#383838">BLK/RED</text>
<path d="M108.5,735.3 L773.4,735.3 L773.4,830" stroke="#ff9999" stroke-width="2" fill="none" stroke-linejoin="miter" stroke-linecap="square"/>
<line x1="108.5" y1="735.8" x2="773.4" y2="735.8" stroke="#776666" stroke-width="1"/>
<line x1="773.9" y1="735.3" x2="773.9" y2="830" stroke="#776666" stroke-width="1"/>
<path d="M106.2,743.3000000000001 C109.5,745.4 109.5,749.8000000000001 106.2,752.1" stroke="#555" stroke-width="1.15" fill="none"/>
<text x="110.6" y="744.4" font-size="7.35" fill="#383838">51</text>
<text x="135.7" y="744.4" font-size="7.35" fill="#383838">BLK/WHT</text>
<path d="M108.5,747.6 L712,747.6 L712,830" stroke="#444444" stroke-width="1.4" fill="none" stroke-linejoin="miter" stroke-linecap="square"/>
<line x1="108.5" y1="748.1" x2="712" y2="748.1" stroke="#777777" stroke-width="1"/>
<line x1="712.5" y1="747.6" x2="712.5" y2="830" stroke="#777777" stroke-width="1"/>
<path d="M106.2,755.6 C109.5,757.6999999999999 109.5,762.1 106.2,764.4" stroke="#555" stroke-width="1.15" fill="none"/>
<text x="110.6" y="756.6999999999999" font-size="7.35" fill="#383838">15</text>
<text x="135.7" y="756.6999999999999" font-size="7.35" fill="#383838">ORG/GRN</text>
<path d="M108.5,759.9 L195,759.9" stroke="#e8a030" stroke-width="2" fill="none" stroke-linejoin="miter" stroke-linecap="square"/>
<line x1="108.5" y1="760.4" x2="195" y2="760.4" stroke="#aa9955" stroke-width="1"/>
<path d="M194.6,755.9 L202.7,759.9 L194.6,763.9 Z" fill="#111"/>
<path d="M106.2,767.9000000000001 C109.5,770.0 109.5,774.4000000000001 106.2,776.7" stroke="#555" stroke-width="1.15" fill="none"/>
<text x="110.6" y="769.0" font-size="7.35" fill="#383838">16</text>
<text x="135.7" y="769.0" font-size="7.35" fill="#383838">ORG/BRN</text>
<path d="M108.5,772.2 L195,772.2" stroke="#f09040" stroke-width="2" fill="none" stroke-linejoin="miter" stroke-linecap="square"/>
<line x1="108.5" y1="772.7" x2="195" y2="772.7" stroke="#cc8844" stroke-width="1"/>
<path d="M194.6,768.2 L202.7,772.2 L194.6,776.2 Z" fill="#111"/>
<path d="M106.2,780.2 C109.5,782.3 109.5,786.7 106.2,789.0" stroke="#555" stroke-width="1.15" fill="none"/>
<text x="110.6" y="781.3" font-size="7.35" fill="#383838">27</text>
<text x="135.7" y="781.3" font-size="7.35" fill="#383838">YEL/BRN</text>
<path d="M108.5,784.5 L552.1,784.5 L552.1,830" stroke="#eeee00" stroke-width="2" fill="none" stroke-linejoin="miter" stroke-linecap="square"/>
<line x1="108.5" y1="785.0" x2="552.1" y2="785.0" stroke="#dddd33" stroke-width="1"/>
<line x1="552.6" y1="784.5" x2="552.6" y2="830" stroke="#dddd33" stroke-width="1"/>
<path d="M106.2,792.5 C109.5,794.5999999999999 109.5,799.0 106.2,801.3" stroke="#555" stroke-width="1.15" fill="none"/>
<text x="110.6" y="793.5999999999999" font-size="7.35" fill="#383838">50</text>
<text x="135.7" y="793.5999999999999" font-size="7.35" fill="#383838">BLK/GRN</text>
<path d="M108.5,796.8 L428.3,796.8 L428.3,830" stroke="#556655" stroke-width="2" fill="none" stroke-linejoin="miter" stroke-linecap="square"/>
<line x1="108.5" y1="797.3" x2="428.3" y2="797.3" stroke="#66aa55" stroke-width="1"/>
<line x1="428.8" y1="796.8" x2="428.8" y2="830" stroke="#66aa55" stroke-width="1"/>
<text x="110.5" y="807.6" font-size="7.35" fill="#383838" text-decoration="underline">T52C</text>
<path d="M106.2,817.1 C109.5,819.1999999999999 109.5,823.6 106.2,825.9" stroke="#555" stroke-width="1.15" fill="none"/>
<text x="110.6" y="818.1999999999999" font-size="7.35" fill="#383838">44</text>
<text x="135.7" y="818.1999999999999" font-size="7.35" fill="#383838">GRY/RED</text>
<path d="M108.5,821.4 L367.5,821.4" stroke="#ffaaaa" stroke-width="2" fill="none" stroke-linejoin="miter" stroke-linecap="square"/>
<line x1="108.5" y1="821.9" x2="367.5" y2="821.9" stroke="#dddddd" stroke-width="1"/>
<path d="M551.4,272.5 L551.4,477 L896.5,477" stroke="#9966cc" stroke-width="2" fill="none" stroke-linejoin="miter" stroke-linecap="square"/>
<line x1="551.9" y1="272.5" x2="551.9" y2="477" stroke="#777777" stroke-width="1"/>
<line x1="551.4" y1="477.5" x2="896.5" y2="477.5" stroke="#777777" stroke-width="1"/>
<path d="M490.3,280.5 L490.3,500.8 L896.5,500.8" stroke="#f8b0b0" stroke-width="1.5" fill="none" stroke-linejoin="miter" stroke-linecap="square"/>
<path d="M601,272.5 L601,427.2 L145.5,427.2" stroke="#ff1a1a" stroke-width="1.5" fill="none" stroke-linejoin="miter" stroke-linecap="square"/>
<text x="896.1" y="473.7" text-anchor="end" font-size="7.35" fill="#383838">BLK/VIO</text>
<text x="904.5" y="479.8" font-size="7.35" fill="#383838">1</text>
<text x="904.5" y="505.1" font-size="7.35" fill="#383838">2</text>
<text x="896.1" y="522.9000000000001" text-anchor="end" font-size="7.35" fill="#383838">WHT/YEL</text>
<text x="904.5" y="529.0" font-size="7.35" fill="#383838">3</text>
<text x="896.1" y="535.2" text-anchor="end" font-size="7.35" fill="#383838">RED/BLK</text>
<text x="904.5" y="541.3" font-size="7.35" fill="#383838">4</text>
<text x="896.1" y="596.7" text-anchor="end" font-size="7.35" fill="#383838">WHT</text>
<text x="904.5" y="602.8" font-size="7.35" fill="#383838">5</text>
<text x="896.1" y="609.0" text-anchor="end" font-size="7.35" fill="#383838">BLK/RED</text>
<text x="904.5" y="615.0999999999999" font-size="7.35" fill="#383838">6</text>
<text x="896.1" y="633.6" text-anchor="end" font-size="7.35" fill="#383838">BLK/VIO</text>
<text x="904.5" y="639.6999999999999" font-size="7.35" fill="#383838">7</text>
<text x="896.1" y="658.2" text-anchor="end" font-size="7.35" fill="#383838">GRY/RED</text>
<text x="904.5" y="664.3" font-size="7.35" fill="#383838">8</text>
<text x="896.1" y="670.5" text-anchor="end" font-size="7.35" fill="#383838">GRY/WHT</text>
<text x="904.5" y="676.5999999999999" font-size="7.35" fill="#383838">9</text>
<text x="896.1" y="695.1" text-anchor="end" font-size="7.35" fill="#383838">BLK/GRN</text>
<text x="902.7" y="701.1999999999999" font-size="7.35" fill="#383838">10</text>
<text x="896.1" y="486.6" text-anchor="end" font-size="7.35" fill="#383838">WHT/RED</text>
<text x="896.1" y="496.3" text-anchor="end" font-size="7.35" fill="#383838">(OR BLK/YEL)</text>
<text x="205.9" y="763.9" font-size="7.35" fill="#383838">COMPUTER DATA</text>
<text x="205.9" y="774.2" font-size="7.35" fill="#383838">LINES SYSTEM</text>
<rect x="0" y="822" width="928" height="25" fill="#fff"/>
</svg></body></html>
